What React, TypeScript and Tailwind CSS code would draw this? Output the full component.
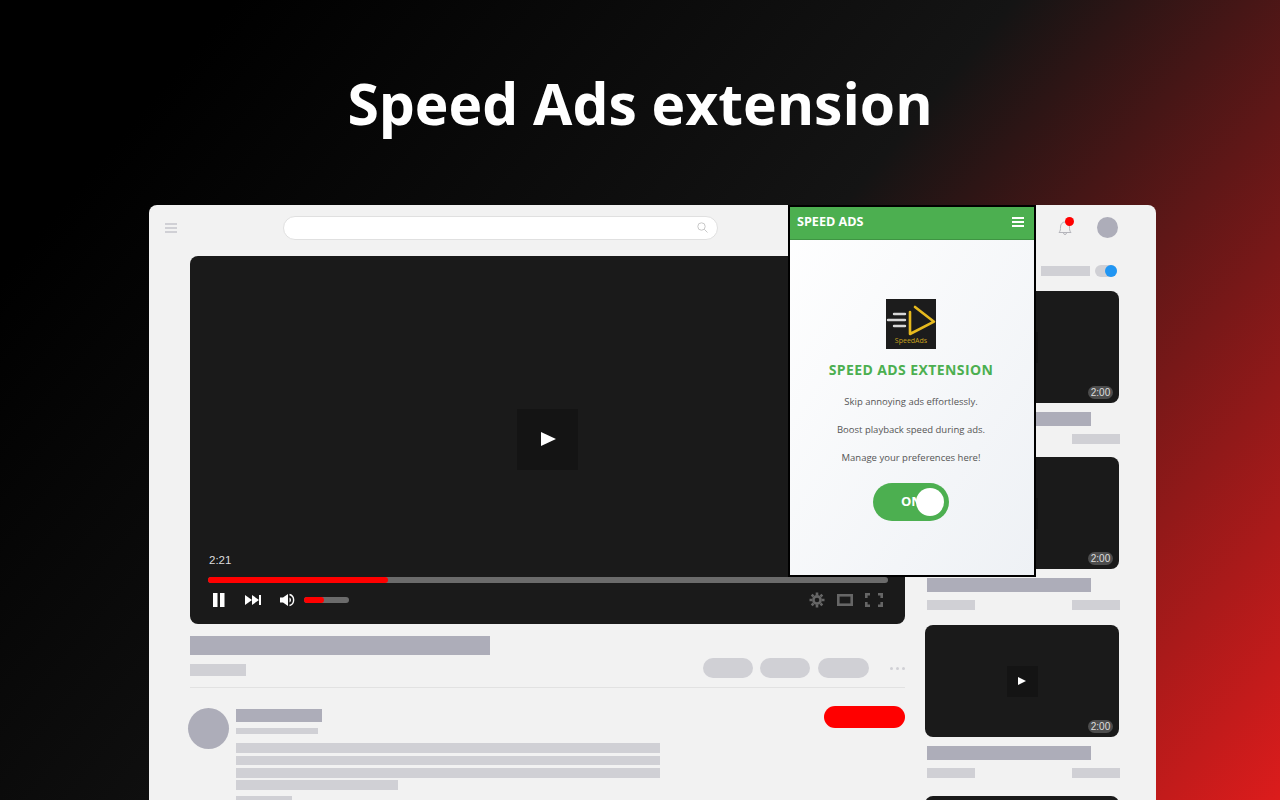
import React from 'react';

// grey placeholder bars
function Bar({ className }: { className: string }) {
    return <div className={`shrink-0 ${className}`} />;
}

function VideoCard({ mt }: { mt: string }) {
    return (
        <div className={mt}>
            <div className="relative flex h-[112px] w-[194px] items-center justify-center rounded-lg bg-[#1a1a1a]">
                <div className="flex h-[31px] w-[31px] items-center justify-center bg-[#141414]">
                    <svg width="8" height="8" viewBox="0 0 8 8"><polygon points="0,0 8,4 0,8" fill="#fff" /></svg>
                </div>
                <div className="absolute bottom-[4px] right-[6px] flex h-[13px] w-[25px] items-center justify-center rounded-full bg-[#4d4d4d] text-[10px] leading-none text-[#ddd] font-['Liberation_Sans',sans-serif]">2:00</div>
            </div>
            <Bar className="ml-[2px] mt-[9px] h-[14px] w-[164px] bg-[#adadb9]" />
            <div className="ml-[2px] mt-[8px] flex w-[193px] justify-between">
                <Bar className="h-[10px] w-[48px] bg-[#d0d0d5]" />
                <Bar className="h-[10px] w-[48px] bg-[#d0d0d5]" />
            </div>
        </div>
    );
}

function Popup() {
    return (
        <div className="absolute left-[639px] top-0 z-10 flex h-[372px] w-[248px] flex-col border-2 border-black bg-gradient-to-br from-white to-[#eef1f5] font-['Open_Sans',sans-serif]">
            <div className="flex h-[33px] shrink-0 items-center justify-between border-b border-[#3f9443] bg-[#4caf50] pb-[2px] pl-[7px] pr-[10px]">
                <span className="text-[12.6px] font-bold text-white">SPEED ADS</span>
                <div className="flex w-[12px] flex-col gap-[2px]">
                    <div className="h-[2px] bg-white" />
                    <div className="h-[2px] bg-white" />
                    <div className="h-[2px] bg-white" />
                </div>
            </div>
            <div className="flex flex-col items-center pr-[2px]">
                <div className="mt-[59px] flex h-[50px] w-[50px] flex-col items-center bg-[#1c1c1c]">
                    <svg width="50" height="38" viewBox="0 0 50 38" fill="none">
                        <path d="M24 13 L24 35 L48 22.7 L29 8" stroke="#e6b91e" strokeWidth="2.6" strokeLinejoin="round" strokeLinecap="round" />
                        <path d="M8 15 H19 M2 21 H19 M8 27 H19" stroke="#d8d8d8" strokeWidth="2.4" strokeLinecap="round" />
                    </svg>
                    <span className="text-[7px] leading-none text-[#c9a31c]">SpeedAds</span>
                </div>
                <div className="mt-[11px] text-[14px] font-bold leading-[20px] tracking-[0.4px] text-[#4caf50]">SPEED ADS EXTENSION</div>
                <div className="mt-[15px] text-[9.5px] leading-[14px] text-[#555]">Skip annoying ads effortlessly.</div>
                <div className="mt-[14px] text-[9.5px] leading-[14px] text-[#555]">Boost playback speed during ads.</div>
                <div className="mt-[14px] text-[9.5px] leading-[14px] text-[#555]">Manage your preferences here!</div>
                <div className="relative mt-[18px] flex h-[38px] w-[76px] items-center rounded-full bg-[#4caf50] pl-[28px]">
                    <span className="text-[13px] font-bold text-white">ON</span>
                    <div className="absolute right-[5px] top-[5px] h-[28px] w-[28px] rounded-full bg-white" />
                </div>
            </div>
        </div>
    );
}

export default function App() {
    return (
        <div className="flex h-[800px] w-[1280px] flex-col overflow-hidden bg-[linear-gradient(130deg,#000_12%,#141414_52%,#dc1c1c_100%)]">
            <h1 className="mt-[65px] text-center text-[57px] font-bold leading-[76px] text-white font-['Open_Sans',sans-serif]">Speed Ads extension</h1>

            <div className="relative ml-[149px] mt-[64px] h-[700px] w-[1007px] shrink-0 rounded-t-lg bg-[#f2f2f2]">
                <Popup />

                {/* top bar */}
                <div className="flex h-[51px] items-center pb-[6px]">
                    <div className="ml-[16px] flex w-[12px] flex-col gap-[2px]">
                        <div className="h-[2px] bg-[#d0d0d5]" />
                        <div className="h-[2px] bg-[#d0d0d5]" />
                        <div className="h-[2px] bg-[#d0d0d5]" />
                    </div>
                    <div className="ml-[106px] flex h-[24px] w-[435px] items-center justify-end rounded-full border border-[#e0e0e0] bg-white pr-[9px]">
                        <svg width="11" height="11" viewBox="0 0 11 11" fill="none" stroke="#c8c8c8" strokeWidth="1"><circle cx="4.5" cy="4.5" r="3.7" /><path d="M7.3 7.3 L10.5 10.5" /></svg>
                    </div>
                    <div className="relative ml-[340px] h-[16px] w-[14px]">
                        <svg width="14" height="16" viewBox="0 0 14 16" fill="none" stroke="#b5b5bb" strokeWidth="1"><path d="M1 12.5 C2.5 11 2.5 9 2.5 7 C2.5 4 4.5 2 7 2 C9.5 2 11.5 4 11.5 7 C11.5 9 11.5 11 13 12.5 Z" /><path d="M5.5 13 C5.5 15 8.5 15 8.5 13" /></svg>
                        <div className="absolute right-[-2px] top-[-3px] h-[9px] w-[9px] rounded-full bg-[#ff0000]" />
                    </div>
                    <div className="ml-[25px] h-[21px] w-[21px] rounded-full bg-[#adadb9]" />
                </div>

                <div className="flex">
                    {/* main column */}
                    <div className="ml-[41px] w-[715px]">
                        <div className="relative flex h-[368px] items-center justify-center rounded-lg bg-[#1a1a1a]">
                            <div className="mb-[2px] flex h-[61px] w-[61px] items-center justify-center bg-[#141414]">
                                <svg className="ml-[2px]" width="15" height="14" viewBox="0 0 15 14"><polygon points="0,0 15,7 0,14" fill="#fff" /></svg>
                            </div>
                            <div className="absolute inset-x-[18px] bottom-[16px]">
                                <div className="ml-[1px] text-[11.5px] leading-[14px] text-[#ddd] font-['Liberation_Sans',sans-serif]">2:21</div>
                                <div className="mt-[10px] h-[6px] w-[680px] rounded-full bg-[#6b6b6b]">
                                    <div className="h-[6px] w-[180px] rounded-full bg-[#ff0000]" />
                                </div>
                                <div className="mt-[9px] flex h-[16px] items-center">
                                    <svg className="ml-[5px]" width="12" height="14" viewBox="0 0 12 14" fill="#fff"><rect x="0" y="0" width="4.5" height="14" /><rect x="7" y="0" width="4.5" height="14" /></svg>
                                    <svg className="ml-[20px]" width="16" height="10" viewBox="0 0 16 10" fill="#fff"><polygon points="0,0 7,5 0,10" /><polygon points="7,0 14,5 7,10" /><rect x="14" y="0" width="2" height="10" /></svg>
                                    <svg className="ml-[19px]" width="15" height="14" viewBox="0 0 15 14" fill="#fff"><polygon points="0,4.5 3,4.5 8,1 8,13 3,9.5 0,9.5" /><path d="M9.5 4.5 C11.5 5.5 11.5 8.5 9.5 9.5 Z" /><path d="M9.5 1.5 C15 3 15 11 9.5 12.5" fill="none" stroke="#fff" strokeWidth="1.4" /></svg>
                                    <div className="ml-[9px] h-[6px] w-[45px] rounded-full bg-[#6b6b6b]">
                                        <div className="h-[6px] w-[20px] rounded-full bg-[#ff0000]" />
                                    </div>
                                    <svg className="ml-auto" width="16" height="16" viewBox="0 0 16 16" fill="none" stroke="#666" strokeWidth="2.6"><circle cx="8" cy="8" r="3.6" /><path d="M8 0.5 V3 M8 13 V15.5 M0.5 8 H3 M13 8 H15.5 M2.7 2.7 L4.5 4.5 M11.5 11.5 L13.3 13.3 M13.3 2.7 L11.5 4.5 M4.5 11.5 L2.7 13.3" /></svg>
                                    <svg className="ml-[12px]" width="16" height="12" viewBox="0 0 16 12" fill="none" stroke="#666" strokeWidth="2.6"><rect x="1.3" y="1.3" width="13.4" height="9.4" /></svg>
                                    <svg className="ml-[12px] mr-[4px]" width="18" height="14" viewBox="0 0 18 14" fill="none" stroke="#666" strokeWidth="2.6"><path d="M1.3 5 V1.3 H5 M13 1.3 H16.7 V5 M1.3 9 V12.7 H5 M13 12.7 H16.7 V9" /></svg>
                                </div>
                            </div>
                        </div>

                        <Bar className="mt-[12px] h-[19px] w-[300px] bg-[#adadb9]" />
                        <div className="mt-[3px] flex items-start">
                            <Bar className="mt-[6px] h-[12px] w-[56px] bg-[#d0d0d5]" />
                            <div className="ml-[457px] h-[20px] w-[50px] rounded-full bg-[#d0d0d5]" />
                            <div className="ml-[7px] h-[20px] w-[51px] rounded-full bg-[#d0d0d5]" />
                            <div className="ml-[8px] h-[20px] w-[51px] rounded-full bg-[#d0d0d5]" />
                            <div className="ml-[21px] mt-[9px] flex gap-[3px]">
                                <div className="h-[3px] w-[3px] rounded-full bg-[#d0d0d5]" />
                                <div className="h-[3px] w-[3px] rounded-full bg-[#d0d0d5]" />
                                <div className="h-[3px] w-[3px] rounded-full bg-[#d0d0d5]" />
                            </div>
                        </div>
                        <div className="mt-[9px] h-px bg-[#e2e2e2]" />

                        <div className="relative ml-[-2px] mt-[20px] flex">
                            <div className="h-[41px] w-[41px] shrink-0 rounded-full bg-[#adadb9]" />
                            <div className="ml-[7px] flex w-[424px] flex-col">
                                <Bar className="mt-[1px] h-[13px] w-[86px] bg-[#adadb9]" />
                                <Bar className="mt-[6px] h-[6px] w-[82px] bg-[#d0d0d5]" />
                                <Bar className="mt-[9px] h-[10px] w-[424px] bg-[#d0d0d5]" />
                                <Bar className="mt-[3px] h-[9px] w-[424px] bg-[#d0d0d5]" />
                                <Bar className="mt-[3px] h-[10px] w-[424px] bg-[#d0d0d5]" />
                                <Bar className="mt-[2px] h-[10px] w-[162px] bg-[#d0d0d5]" />
                                <Bar className="mt-[6px] h-[10px] w-[56px] bg-[#d0d0d5]" />
                            </div>
                            <div className="ml-auto mt-[-2px] h-[22px] w-[81px] rounded-full bg-[#ff0000]" />
                        </div>
                    </div>

                    {/* side column */}
                    <div className="ml-[20px] w-[195px]">
                        <div className="mt-[8px] flex h-[13px] items-center">
                            <Bar className="ml-[116px] h-[10px] w-[49px] bg-[#d0d0d5]" />
                            <div className="relative ml-[5px] h-[12px] w-[22px] rounded-full bg-[#d0d0d5]">
                                <div className="absolute right-0 top-0 h-[12px] w-[12px] rounded-full bg-[#2196f3]" />
                            </div>
                        </div>
                        <VideoCard mt="mt-[14px]" />
                        <VideoCard mt="mt-[13px]" />
                        <VideoCard mt="mt-[15px]" />
                        {/* only the top of this one is on screen */}
                        <div className="mt-[18px] h-[112px] w-[194px] rounded-lg bg-[#1a1a1a]" />
                    </div>
                </div>
            </div>
        </div>
    );
}
